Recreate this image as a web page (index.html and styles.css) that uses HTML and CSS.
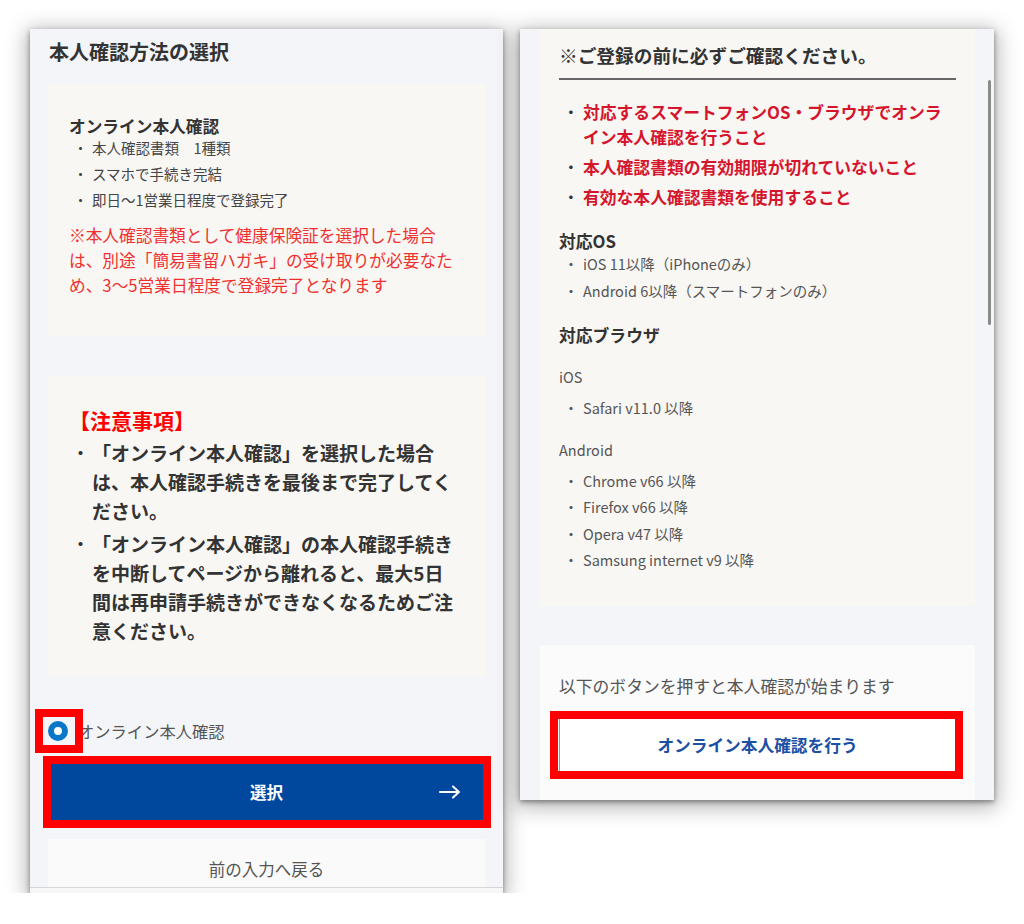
FILE: index.html
```
<!DOCTYPE html>
<html lang="ja">

<head>
    <meta charset="UTF-8">
    <meta name="viewport" content="width=device-width, initial-scale=1.0">
    <title>本人確認方法の選択</title>
    <link rel="stylesheet" href="styles.css">
</head>

<body>

    <div class="shots">

        <!-- left screen -->
        <div class="phone phone-left">
            <div class="screen">
                <h1 class="page-title">本人確認方法の選択</h1>

                <div class="card card-method">
                    <h2 class="method-title">オンライン本人確認</h2>
                    <ul class="dot-list small">
                        <li><span class="dot">・</span><span>本人確認書類　1種類</span></li>
                        <li><span class="dot">・</span><span>スマホで手続き完結</span></li>
                        <li><span class="dot">・</span><span>即日〜1営業日程度で登録完了</span></li>
                    </ul>
                    <p class="note-red">※本人確認書類として健康保険証を選択した場合は、別途「簡易書留ハガキ」の受け取りが必要なため、3〜5営業日程度で登録完了となります</p>
                </div>

                <div class="card card-caution">
                    <h2 class="caution-title">【注意事項】</h2>
                    <ul class="dot-list big">
                        <li><span class="dot">・</span><span>「オンライン本人確認」を選択した場合は、本人確認手続きを最後まで完了してください。</span></li>
                        <li><span class="dot">・</span><span>「オンライン本人確認」の本人確認手続きを中断してページから離れると、最大5日間は再申請手続きができなくなるためご注意ください。</span></li>
                    </ul>
                </div>

                <label class="radio-row">
                    <span class="radio-wrap">
                        <span class="radio"></span>
                        <span class="mark mark-radio"></span>
                    </span>
                    <span class="radio-label">オンライン本人確認</span>
                </label>

                <div class="btn-wrap wrap-select">
                    <a href="javascript:;" class="btn-select">
                        <span></span>
                        <span class="btn-text">選択</span>
                        <svg class="btn-arrow" width="22" height="14" viewBox="0 0 22 14">
                            <path d="M1 7h19M14 1.5l6 5.5-6 5.5" fill="none" stroke="#fff" stroke-width="2" stroke-linecap="round" stroke-linejoin="round" />
                        </svg>
                    </a>
                    <span class="mark mark-select"></span>
                </div>

                <a href="javascript:;" class="btn-back">前の入力へ戻る</a>
            </div>
            <div class="bottom-bar"></div>
        </div>

        <!-- right screen -->
        <div class="phone phone-right">
            <div class="screen">
                <div class="card card-check">
                    <h2 class="check-title">※ご登録の前に必ずご確認ください。</h2>
                    <ul class="dot-list red">
                        <li><span class="dot">・</span><span>対応するスマートフォンOS・ブラウザでオンライン本人確認を行うこと</span></li>
                        <li><span class="dot">・</span><span>本人確認書類の有効期限が切れていないこと</span></li>
                        <li><span class="dot">・</span><span>有効な本人確認書類を使用すること</span></li>
                    </ul>

                    <h3 class="sub-title">対応OS</h3>
                    <ul class="dot-list gray">
                        <li><span class="dot">・</span><span>iOS 11以降（iPhoneのみ）</span></li>
                        <li><span class="dot">・</span><span>Android 6以降（スマートフォンのみ）</span></li>
                    </ul>

                    <h3 class="sub-title">対応ブラウザ</h3>
                    <p class="os-name first">iOS</p>
                    <ul class="dot-list gray">
                        <li><span class="dot">・</span><span>Safari v11.0 以降</span></li>
                    </ul>
                    <p class="os-name">Android</p>
                    <ul class="dot-list gray">
                        <li><span class="dot">・</span><span>Chrome v66 以降</span></li>
                        <li><span class="dot">・</span><span>Firefox v66 以降</span></li>
                        <li><span class="dot">・</span><span>Opera v47 以降</span></li>
                        <li><span class="dot">・</span><span>Samsung internet v9 以降</span></li>
                    </ul>
                </div>

                <div class="card card-start">
                    <p class="start-text">以下のボタンを押すと本人確認が始まります</p>
                    <div class="btn-wrap wrap-start">
                        <a href="javascript:;" class="btn-start">オンライン本人確認を行う</a>
                        <span class="mark mark-start"></span>
                    </div>
                </div>
            </div>
            <span class="scroll-thumb"></span>
        </div>

    </div>

</body>

</html>
```

FILE: styles.css
```
/* reset START */
* {
    margin: 0;
    padding: 0;
    box-sizing: border-box;
}

a {
    text-decoration: none;
}

ul {
    list-style: none;
}

body {
    background-color: #ffffff;
    font-family: "Noto Sans CJK JP", "Noto Sans", sans-serif;
    color: #333333;
}

/* reset END */

/* layout START */
.shots {
    display: flex;
    align-items: flex-start;
    gap: 17px;
    padding: 29px 0 0 30px;
}

.phone {
    position: relative;
    overflow: hidden;
    background-color: #f4f5f9;
    box-shadow: 0 2px 5px rgba(0, 0, 0, 0.4), 0 4px 20px 3px rgba(0, 0, 0, 0.3);
}

.phone-left {
    width: 473px;
    height: 864px;
    display: flex;
    flex-direction: column;
}

.phone-left .screen {
    flex: 1;
    overflow: hidden;
    padding: 0 18px;
}

.bottom-bar {
    height: 6px;
    background-color: #f7f7f7;
    border-top: 1px solid #d6d6d6;
}

.phone-right {
    width: 474px;
    height: 771px;
}

.phone-right .screen {
    padding: 0 19px 0 20px;
}

.card {
    background-color: #f8f7f4;
}

/* layout END */

/* lists START */
.dot-list li {
    display: flex;
}

.dot-list .dot {
    flex: none;
    width: 23px;
    text-align: center;
    font-weight: 400;
}

.dot-list.small li {
    font-size: 14.5px;
    line-height: 26px;
    color: #444444;
}

.dot-list.big li {
    font-size: 19px;
    font-weight: 700;
    line-height: 29px;
    color: #333333;
}

.dot-list.big li+li {
    margin-top: 4px;
}

.dot-list.red {
    margin-top: 20px;
    padding-right: 8px;
}

.dot-list.red li {
    font-size: 16.8px;
    font-weight: 700;
    line-height: 25px;
    color: #d5152c;
}

.dot-list.red .dot {
    color: #333333;
}

.dot-list.red li+li {
    margin-top: 5px;
}

.dot-list.red .dot,
.dot-list.gray .dot {
    width: 24px;
}

.dot-list.gray {
    margin-top: 6px;
}

.dot-list.gray li {
    font-size: 14.5px;
    line-height: 26.5px;
    color: #555555;
}

/* lists END */

/* left screen START */
.page-title {
    margin: 9px 0 18px 1px;
    font-size: 20px;
    line-height: 28px;
    font-weight: 700;
    color: #333333;
}

.card-method {
    padding: 31px 26px 38px 21px;
}

.method-title {
    font-size: 16.7px;
    line-height: 22px;
    font-weight: 700;
    color: #333333;
}

.card-method .dot-list {
    margin-top: -2px;
}

.note-red {
    margin-top: 10px;
    font-size: 16.7px;
    line-height: 25px;
    color: #f0302e;
}

.card-caution {
    margin-top: 40px;
    padding: 28px 25px 32px 21px;
}

.caution-title {
    font-size: 21px;
    line-height: 32px;
    font-weight: 700;
    color: #ff0000;
}

.card-caution .dot-list {
    margin-top: 2px;
}

.radio-row {
    display: flex;
    align-items: center;
    gap: 10px;
    height: 24px;
    margin-top: 42px;
}

.radio-wrap {
    position: relative;
    display: block;
    width: 20px;
    height: 20px;
}

.radio {
    display: block;
    width: 20px;
    height: 20px;
    border-radius: 50%;
    border: 6px solid #0a76c8;
    background-color: #ffffff;
}

.radio-label {
    font-size: 16.3px;
    color: #555555;
}

.btn-wrap {
    position: relative;
}

.wrap-select {
    margin-top: 19px;
}

.btn-select {
    display: grid;
    grid-template-columns: 1fr auto 1fr;
    align-items: center;
    height: 60px;
    background-color: #00479e;
    color: #ffffff;
    font-size: 16.5px;
    font-weight: 700;
}

.btn-arrow {
    justify-self: end;
    margin-right: 24px;
}

.btn-back {
    display: block;
    height: 70px;
    margin-top: 17px;
    padding-top: 17px;
    background-color: #fafafa;
    text-align: center;
    font-size: 16.5px;
    line-height: 26px;
    color: #555555;
}

/* left screen END */

/* red marks START */
.mark {
    position: absolute;
    border: 8px solid #ff0000;
}

.mark-radio {
    left: -13px;
    top: -12px;
    width: 48px;
    height: 44px;
}

.mark-select {
    left: -5px;
    right: -6px;
    top: -6px;
    bottom: -6px;
}

.mark-start {
    left: -9px;
    right: -7px;
    top: -6px;
    bottom: -5px;
}

/* red marks END */

/* right screen START */
.card-check {
    padding: 13px 19px 32px 19px;
}

.check-title {
    padding-bottom: 10px;
    border-bottom: 2px solid #666666;
    font-size: 18.7px;
    line-height: 26px;
    font-weight: 700;
    color: #333333;
}

.sub-title {
    margin-top: 19px;
    font-size: 16.8px;
    line-height: 24px;
    font-weight: 700;
    color: #333333;
}

.sub-title+.dot-list.gray {
    margin-top: -2px;
}

.os-name {
    margin-top: 15px;
    font-size: 14.5px;
    line-height: 26px;
    color: #555555;
}

.os-name.first {
    margin-top: 17px;
}

.os-name+.dot-list.gray {
    margin-top: 5px;
}

.card-start {
    margin-top: 39px;
    height: 200px;
    padding: 28px 19px 0 19px;
    background-color: #fbfbfc;
}

.start-text {
    font-size: 16.8px;
    line-height: 26px;
    color: #555555;
}

.wrap-start {
    margin-top: 18px;
}

.btn-start {
    display: block;
    height: 57px;
    border: 1px solid #cfd5df;
    border-left-color: #7d9ad0;
    background-color: #ffffff;
    text-align: center;
    font-size: 16.7px;
    font-weight: 700;
    line-height: 55px;
    color: #1d4fa3;
}

.scroll-thumb {
    position: absolute;
    left: 468px;
    top: 51px;
    width: 3px;
    height: 245px;
    border-radius: 2px;
    background-color: #8a8a8a;
}

/* right screen END */
```
